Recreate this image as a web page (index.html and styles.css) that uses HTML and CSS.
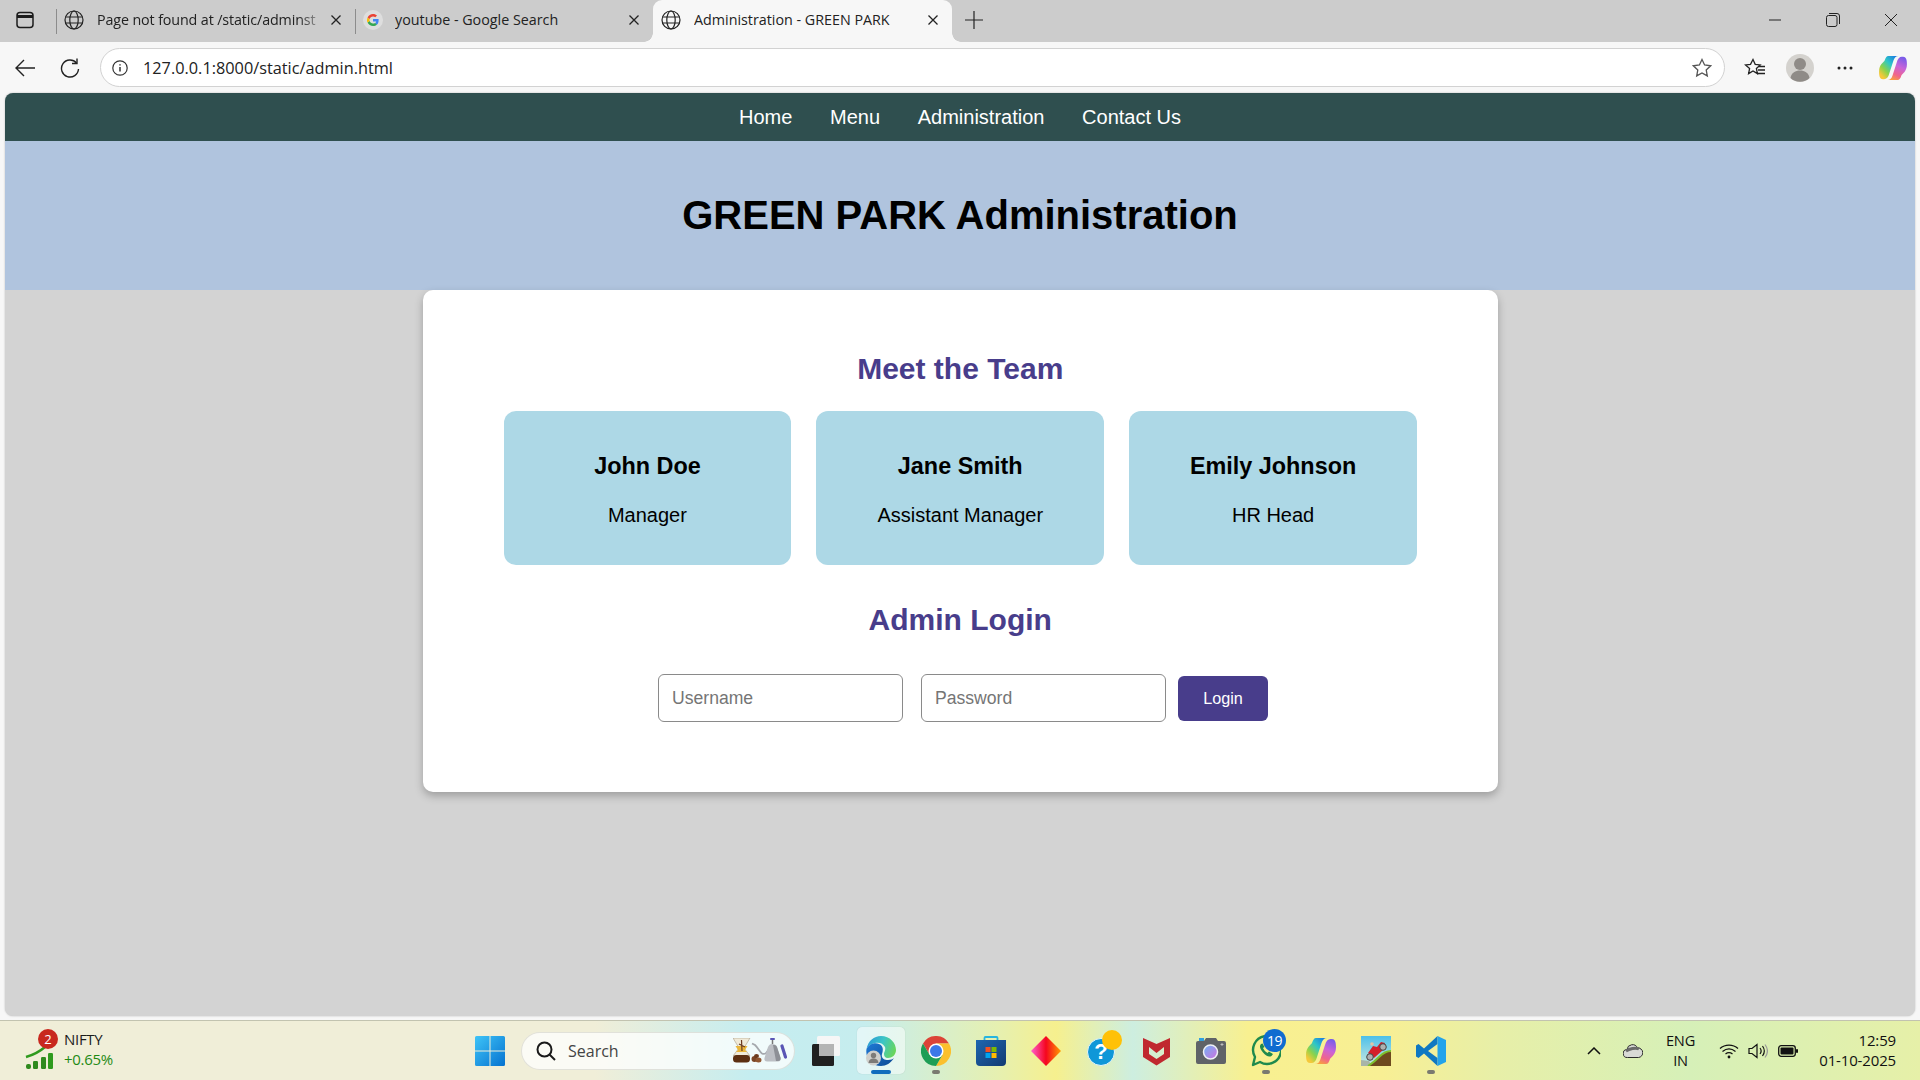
FILE: index.html
```html
<!DOCTYPE html>
<html lang="en">
<head>
<meta charset="utf-8">
<title>Administration - GREEN PARK</title>
<link rel="stylesheet" href="styles.css">
</head>
<body>
<div class="window">
  <div class="tabstrip">
    <div class="panel-btn">
      <svg width="18" height="18" viewBox="0 0 18 18" fill="none" stroke="#1c1c1c" stroke-width="1.5"><rect x="1" y="1.5" width="16" height="15" rx="3"/><path d="M1 5.5h16" stroke-width="3"/></svg>
    </div>
    <div class="tab tab-sep">
      <svg class="favicon" viewBox="0 0 20 20" fill="none" stroke="#222" stroke-width="1.2"><circle cx="10" cy="10" r="9"/><ellipse cx="10" cy="10" rx="4.2" ry="9"/><path d="M1.6 7h16.8M1.6 13h16.8"/></svg>
      <span class="tab-title fade">Page not found at /static/adminst</span>
      <svg class="tab-close" viewBox="0 0 12 12" stroke="#222" stroke-width="1.3"><path d="M1.5 1.5l9 9M10.5 1.5l-9 9"/></svg>
    </div>
    <div class="tab tab-sep tab-second">
      <svg class="favicon" viewBox="0 0 20 20"><circle cx="10" cy="10" r="10" fill="#dedede"/><path d="M15.6 10.2c0-.5 0-.9-.1-1.3H10v2.500h3.200c-.2.800-.6 1.400-1.200 1.900l1.900 1.500c1.100-1 1.700-2.600 1.700-4.600z" fill="#4285f4"/><path d="M10 16c1.600 0 3-.5 3.900-1.500L12 13c-.5.400-1.200.600-2 .600-1.600 0-2.900-1-3.400-2.500l-2 1.500C5.600 14.700 7.600 16 10 16z" fill="#34a853"/><path d="M6.600 11.100c-.2-.7-.2-1.500 0-2.200l-2-1.500c-.8 1.600-.8 3.600 0 5.200z" fill="#fbbc05"/><path d="M10 6.400c.9 0 1.700.3 2.300.9l1.700-1.700C13 4.600 11.600 4 10 4 7.600 4 5.600 5.300 4.600 7.400l2 1.500C7.100 7.400 8.400 6.400 10 6.400z" fill="#ea4335"/></svg>
      <span class="tab-title">youtube - Google Search</span>
      <svg class="tab-close" viewBox="0 0 12 12" stroke="#222" stroke-width="1.3"><path d="M1.5 1.5l9 9M10.500 1.500l-9 9"/></svg>
    </div>
    <div class="tab tab-active">
      <svg class="favicon" viewBox="0 0 20 20" fill="none" stroke="#222" stroke-width="1.2"><circle cx="10" cy="10" r="9"/><ellipse cx="10" cy="10" rx="4.2" ry="9"/><path d="M1.6 7h16.8M1.6 13h16.800"/></svg>
      <span class="tab-title">Administration - GREEN PARK</span>
      <svg class="tab-close" viewBox="0 0 12 12" stroke="#222" stroke-width="1.3"><path d="M1.5 1.5l9 9M10.500 1.500l-9 9"/></svg>
    </div>
    <svg class="new-tab" width="18" height="18" viewBox="0 0 18 18" stroke="#222" stroke-width="1.2"><path d="M9 0v18M0 9h18"/></svg>
    <div class="win-controls">
      <svg width="14" height="14" viewBox="0 0 14 14" stroke="#222" stroke-width="1"><path d="M1 7h12"/></svg>
      <svg width="14" height="14" viewBox="0 0 14 14" fill="none" stroke="#222" stroke-width="1"><rect x=".5" y="2.500" width="10.500" height="11" rx="2"/><path d="M3 .5h8a2.500 2.500 0 0 1 2.500 2.500v8"/></svg>
      <svg width="14" height="14" viewBox="0 0 14 14" stroke="#222" stroke-width="1"><path d="M1 1l12 12M13 1L1 13"/></svg>
    </div>
  </div>

  <div class="toolbar">
    <svg class="tb-back" width="20" height="18" viewBox="0 0 20 18" fill="none" stroke="#222" stroke-width="1.4"><path d="M20 9H1M9 1L1 9l8 8"/></svg>
    <svg class="tb-reload" width="20" height="20" viewBox="0 0 20 20" fill="none" stroke="#222" stroke-width="1.4"><path d="M16.500 5A8.500 8.500 0 1 0 18.500 11"/><path d="M17 .5V5.500h-5"/></svg>
    <div class="address">
      <svg width="16" height="16" viewBox="0 0 16 16" fill="none" stroke="#333" stroke-width="1.200"><circle cx="8" cy="8" r="7.200"/><path d="M8 7v4.500" stroke-width="1.500"/><path d="M8 4.200v1.400" stroke-width="1.500"/></svg>
      <span class="url">127.0.0.1:8000/static/admin.html</span>
      <svg class="addr-star" width="20" height="20" viewBox="0 0 20 20" fill="none" stroke="#555" stroke-width="1.300"><path d="M10 1.500l2.600 5.500 6 .8-4.400 4.100 1.100 6L10 15l-5.300 2.900 1.100-6L1.400 7.800l6-.8z"/></svg>
    </div>
    <div class="tb-icons">
      <svg class="ic-fav" width="22" height="20" viewBox="0 0 22 20" fill="none" stroke="#222" stroke-width="1.300"><path d="M9 1.500l2.200 4.800 5 .6-3.800 3.500 1 5.200L9 13l-4.400 2.600 1-5.200L1.500 6.900l5-.6z"/><path d="M14.500 8.500H21M14 12h7M13.500 15.500H21"/></svg>
      <svg class="ic-profile" width="28" height="28" viewBox="0 0 28 28"><circle cx="14" cy="14" r="14" fill="#d4d2ce"/><circle cx="14" cy="10" r="6" fill="#8f8b87"/><path d="M4.500 24c1-5.500 5-7.500 9.500-7.500s8.500 2 9.500 7.500a14 14 0 0 1-19 0z" fill="#8f8b87"/></svg>
      <svg class="ic-dots" width="16" height="4" viewBox="0 0 16 4" fill="#222"><circle cx="2" cy="2" r="1.500"/><circle cx="8" cy="2" r="1.500"/><circle cx="14" cy="2" r="1.500"/></svg>
      <svg class="ic-copilot" width="28" height="26" viewBox="0 0 30 28"><use href="#copilot-mark"/></svg>
    </div>
  </div>

  <main class="page">
    <nav class="nav">
      <a>Home</a><a>Menu</a><a>Administration</a><a>Contact Us</a>
    </nav>
    <header class="hero"><h1>GREEN PARK Administration</h1></header>
    <section class="card">
      <h2 class="section-title">Meet the Team</h2>
      <div class="team">
        <article class="member"><h3>John Doe</h3><p>Manager</p></article>
        <article class="member"><h3>Jane Smith</h3><p>Assistant Manager</p></article>
        <article class="member"><h3>Emily Johnson</h3><p>HR Head</p></article>
      </div>
      <h2 class="section-title login-title">Admin Login</h2>
      <form class="login">
        <input type="text" placeholder="Username">
        <input type="password" placeholder="Password">
        <button type="button">Login</button>
      </form>
    </section>
  </main>

  <footer class="taskbar">
    <div class="widget">
      <div class="nifty-icon">
        <svg width="30" height="30" viewBox="0 0 30 30"><path d="M1 16C8 14 13 12 20 6" fill="none" stroke="#2f9a1e" stroke-width="2.500"/><rect x="1" y="23" width="5" height="5" rx="2" fill="#2f8a1e"/><rect x="8" y="20" width="5" height="8" rx="1.200" fill="#2f8a1e"/><rect x="16" y="16" width="5" height="12" rx="1.200" fill="#2f8a1e"/><rect x="23" y="12" width="5" height="16" rx="1.200" fill="#2f9a1e"/></svg>
        <span class="badge-red">2</span>
      </div>
      <div class="nifty-text"><span>NIFTY</span><span class="up">+0.65%</span></div>
    </div>
    <div class="apps">
      <div class="slot slot-start">
        <svg width="30" height="30" viewBox="0 0 30 30"><defs><linearGradient id="w1" x1="0" y1="0" x2="1" y2="1"><stop offset="0" stop-color="#3fc4f7"/><stop offset="1" stop-color="#0572d0"/></linearGradient></defs><path d="M0 1.500A1.500 1.500 0 0 1 1.500 0H14.500V14.500H0zM15.500 0H28.500A1.500 1.500 0 0 1 30 1.500V14.500H15.500zM0 15.500H14.500V30H1.500A1.500 1.500 0 0 1 0 28.500zM15.500 15.500H30V28.500A1.500 1.500 0 0 1 28.500 30H15.500z" fill="url(#w1)"/></svg>
      </div>
      <div class="searchbox">
        <svg width="20" height="20" viewBox="0 0 20 20" fill="none" stroke="#1a1a1a" stroke-width="2"><circle cx="8.500" cy="8.500" r="7"/><path d="M13.500 13.500l5.500 5.500"/></svg>
        <span class="search-label">Search</span>
        <svg class="search-art" width="54" height="26" viewBox="0 0 54 26">
          <path d="M0 0H17L11 10 17 18H0L6 10z" fill="#f0ead8" stroke="#a99a84" stroke-width=".6"/>
          <path d="M2.500 8H14.500L12 12 14 14H3L5 12z" fill="#eab63c"/>
          <path d="M8.500 2L9 13M6 6l6 3" stroke="#6b3a1e" stroke-width="1.200"/>
          <rect x="0" y="17" width="17" height="7.500" rx="3.500" fill="#5c2f12"/>
          <ellipse cx="21.500" cy="21" rx="3" ry="3" fill="#7a4526"/><ellipse cx="25.500" cy="22" rx="3" ry="2.500" fill="#8f5530"/><ellipse cx="23.500" cy="18" rx="2.500" ry="2" fill="#6b3a1e"/>
          <path d="M37 9c-3 6-5 8-8 6.500C27 14 25 10 22 7l-3-1.500" fill="none" stroke="#a5a8ad" stroke-width="1.800"/>
          <path d="M39 6c-2 0-3 1-4 3l-3.500 11c-.5 2 .5 3.500 2.500 3.500h11c2 0 3-1.500 2.500-3.500L44 9c-1-2-2-3-5-3z" fill="#bcbfc4"/>
          <path d="M40 7l3 16h2c2 0 3-1.500 2.500-3.500L44 9c-1-2-2-2-4-2z" fill="#8d9096"/>
          <rect x="37" y="0" width="5" height="2" rx="1" fill="#5a55b5"/><path d="M39.500 2v4" stroke="#777" stroke-width="1.500"/>
          <path d="M49 8l3.500 11" stroke="#5a55b5" stroke-width="3.200" stroke-linecap="round"/>
        </svg>
      </div>
      <div class="slot slot-taskview">
        <svg width="28" height="30" viewBox="0 0 28 30"><rect x="5" y="0" width="23" height="20" rx="1.500" fill="#f6f6f6"/><rect x="0" y="8" width="22" height="22" rx="1.500" fill="#202020"/><rect x="7" y="8" width="15" height="12" fill="#b4b4b4"/></svg>
      </div>
      <div class="slot slot-active">
        <svg width="30" height="30" viewBox="0 0 30 30"><defs><linearGradient id="e1" x1="0" y1=".3" x2="1" y2=".6"><stop offset="0" stop-color="#2a9bd6"/><stop offset=".5" stop-color="#3cc5c6"/><stop offset="1" stop-color="#6ad65a"/></linearGradient><linearGradient id="e2" x1="0" y1="0" x2="1" y2="1"><stop offset="0" stop-color="#1f7ad6"/><stop offset="1" stop-color="#0c4a94"/></linearGradient></defs><path d="M.5 13C2 5 8 0 15 0c9 0 15 7 15 14 0 5-4 8-8 8-3 0-4-2-4-4s2-4 1-7c-2-4-6-5-10-4C5 8 2 10 .5 13z" fill="url(#e1)"/><path d="M.5 13C3 8 9 6 13 8c5 2 4 7 3 10-1 4 2 6 6 6 3 0 5-1 6-2-3 5-8 8-13 8C6 30-1 22 .5 13z" fill="url(#e2)"/><circle cx="7.500" cy="22" r="7.500" fill="#cfcfcb"/><circle cx="7.500" cy="19.500" r="2.700" fill="#7d7b78"/><path d="M2.500 27c.5-3.500 2.500-4.500 5-4.500s4.500 1 5 4.500z" fill="#7d7b78"/></svg>
        <span class="run run-active"></span>
      </div>
      <div class="slot">
        <svg width="30" height="30" viewBox="0 0 30 30"><path d="M2 7.500A15 15 0 0 1 28 7.500H15L8.500 18.750z" fill="#dc4437"/><path d="M28 7.500A15 15 0 0 1 15 30L21.500 18.750 15 7.500z" fill="#fbc02d"/><path d="M15 30A15 15 0 0 1 2 7.500L8.500 18.750H21.500z" fill="#1e9e55"/><circle cx="15" cy="15" r="7.500" fill="#fff"/><circle cx="15" cy="15" r="6" fill="#3b78e7"/></svg>
        <span class="run"></span>
      </div>
      <div class="slot">
        <svg width="30" height="30" viewBox="0 0 30 30"><defs><linearGradient id="s1" x1="0" y1="0" x2="1" y2="1"><stop offset="0" stop-color="#1d66b0"/><stop offset="1" stop-color="#123a72"/></linearGradient></defs><path d="M8.500 5V2a1 1 0 0 1 1-1h11a1 1 0 0 1 1 1v3" fill="none" stroke="#26b5e0" stroke-width="1.800"/><path d="M0 4H30V26a4 4 0 0 1-4 4H4a4 4 0 0 1-4-4z" fill="url(#s1)"/><rect x="9.500" y="11" width="5" height="5" fill="#f25022"/><rect x="15.500" y="11" width="5" height="5" fill="#7fba00"/><rect x="9.500" y="17" width="5" height="5" fill="#00a4ef"/><rect x="15.500" y="17" width="5" height="5" fill="#ffb900"/></svg>
      </div>
      <div class="slot">
        <svg width="30" height="30" viewBox="0 0 30 30"><defs><linearGradient id="d1" x1="0" y1="0" x2="1" y2="0"><stop offset="0" stop-color="#ff5fd0"/><stop offset=".5" stop-color="#f5061e"/><stop offset="1" stop-color="#ff9d00"/></linearGradient></defs><path d="M15 0l15 15-15 15L0 15z" fill="url(#d1)"/></svg>
      </div>
      <div class="slot">
        <div class="help-icon"><span class="help-mark">?</span><span class="help-dot"></span></div>
      </div>
      <div class="slot">
        <svg width="27" height="30" viewBox="0 0 27 30"><path fill-rule="evenodd" d="M0 2L13.500 8 27 2V21L13.500 29.500 0 21zM6 11V18L13.500 23 21 18V11L13.500 17z" fill="#c0282f"/></svg>
      </div>
      <div class="slot">
        <svg width="30" height="26" viewBox="0 0 30 26"><defs><linearGradient id="c1" x1="0" y1="0" x2="1" y2="1"><stop offset="0" stop-color="#6fb4f5"/><stop offset="1" stop-color="#d070e0"/></linearGradient></defs><rect x="3" y="0" width="5" height="3" fill="#2f9fe0"/><path d="M0 5a2 2 0 0 1 2-2h6l2-3h10l2 3h6a2 2 0 0 1 2 2v19a2 2 0 0 1-2 2H2a2 2 0 0 1-2-2z" fill="#5f6368"/><circle cx="14.500" cy="14" r="7" fill="url(#c1)" stroke="#eef0f5" stroke-width="1.500"/><path d="M26 5v3M24.500 6.500h3" stroke="#ccc" stroke-width=".8"/></svg>
      </div>
      <div class="slot">
        <div class="wa-icon">
          <svg width="30" height="32" viewBox="0 0 30 32" fill="none"><path d="M2 30l2-8A14 14 0 1 1 9 27z" stroke="#1f8a4d" stroke-width="2.400" stroke-linejoin="round"/><path d="M10 9c-2 2-1 5 2 8.500 3 3.500 6 5 8.500 3.500l1.500-2-4-2.500-1.500 1.500c-2-1-3.500-3-4.500-5l1.500-1-2-3.500z" fill="#1f8a4d"/></svg>
          <span class="badge-blue">19</span>
        </div>
        <span class="run"></span>
      </div>
      <div class="slot">
        <svg width="30" height="28" viewBox="0 0 30 28"><use href="#copilot-mark"/></svg>
      </div>
      <div class="slot">
        <svg width="30" height="30" viewBox="0 0 30 30"><defs><linearGradient id="g1" x1="0" y1="0" x2="0" y2="1"><stop offset="0" stop-color="#4cc0ea"/><stop offset="1" stop-color="#cdeadf"/></linearGradient></defs><rect width="30" height="30" fill="url(#g1)"/><path d="M0 24l8 1 3 5H0z" fill="#a9b4a8"/><path d="M7 30c5-3 8-6 11-9 4-4 8-6 12-6v15z" fill="#6e4a1f"/><path d="M7 30c5-3 8-6 11-9 4-4 8-6 12-6" fill="none" stroke="#7fc02c" stroke-width="2"/><path d="M7 17l5-7 4 1 4-5 4 1-2 7-9 8z" fill="#d4202a"/><circle cx="9" cy="21" r="3.300" fill="#aeb0b0" stroke="#444" stroke-width="1"/><circle cx="22" cy="11" r="3.300" fill="#aeb0b0" stroke="#444" stroke-width="1"/><circle cx="11" cy="8" r="1.800" fill="#e0c4a8"/></svg>
      </div>
      <div class="slot">
        <svg width="30" height="30" viewBox="0 0 30 30"><path d="M21.500 0L8 12.500 2.500 8 0 9.500v11L2.500 22 8 17.500 21.500 30V22L12 15 21.500 8z" fill="#0f78c2"/><path d="M21.500 0L30 4V26L21.500 30z" fill="#23a3ea"/></svg>
        <span class="run"></span>
      </div>
    </div>
    <div class="tray">
      <svg class="tr-caret" width="14" height="8" viewBox="0 0 14 8" fill="none" stroke="#111" stroke-width="1.500"><path d="M1 7l6-6 6 6"/></svg>
      <svg class="tr-cloud" width="20" height="14" viewBox="0 0 20 14"><path d="M4.500 13.500a4 4 0 0 1-.5-8A5.500 5.500 0 0 1 14.500 4 4.500 4.500 0 0 1 15.500 13.500z" fill="#d9dad6" stroke="#2b2b2b" stroke-width="1"/><path d="M3 7c3-2 10-4 13-2" fill="none" stroke="#6a6a6a" stroke-width="3"/></svg>
      <div class="tr-lang"><span>ENG</span><span>IN</span></div>
      <svg class="tr-wifi" width="20" height="16" viewBox="0 0 20 16" fill="none" stroke="#111" stroke-width="1.300"><path d="M1 5.500C6 1 14 1 19 5.500M3.500 8.500c4-3.200 9-3.200 13 0M6.500 11c2-1.500 5-1.500 7 0"/><circle cx="10" cy="14" r="1.400" fill="#111" stroke="none"/></svg>
      <svg class="tr-vol" width="20" height="16" viewBox="0 0 20 16" fill="none" stroke="#111" stroke-width="1.200"><path d="M1 5.500h3L9 1.500v13l-5-4H1z"/><path d="M12 5c1.300 1.700 1.300 4.300 0 6M14.500 3c2.200 3 2.200 7 0 10"/><path d="M17 1.500c3 4 3 9 0 13" stroke="#999"/></svg>
      <svg class="tr-batt" width="20" height="14" viewBox="0 0 20 14"><rect x=".7" y="1.700" width="16.600" height="10.600" rx="2.500" fill="none" stroke="#111" stroke-width="1.300"/><rect x="2.500" y="3.500" width="13" height="7" rx="1" fill="#111"/><rect x="18" y="5" width="2" height="4" rx="1" fill="#111"/></svg>
      <div class="tr-clock"><span>12:59</span><span>01-10-2025</span></div>
    </div>
  </footer>
</div>
<svg class="sprite" width="0" height="0">
  <defs>
    <linearGradient id="cpl" x1=".8" y1="0" x2="0" y2=".9"><stop offset="0" stop-color="#1c7fe0"/><stop offset=".35" stop-color="#2ec7c7"/><stop offset=".65" stop-color="#8bd34a"/><stop offset=".9" stop-color="#f5c83a"/></linearGradient>
    <linearGradient id="cpr" x1=".7" y1="0" x2=".3" y2="1"><stop offset="0" stop-color="#7a5ce8"/><stop offset=".4" stop-color="#c964d8"/><stop offset=".75" stop-color="#f0648c"/><stop offset="1" stop-color="#f8a040"/></linearGradient>
    <symbol id="copilot-mark" viewBox="0 0 30 28">
      <path d="M10 1H21C18 1 16.500 3 15.500 6L11 20C10 24 8 26 5.500 26H4C1 26 0 23 0 18 0 10 5 8 6 6 7 3 8 1 10 1z" fill="url(#cpl)"/>
      <path d="M20 27H9C12 27 13.500 25 14.500 22L19 8C20 4 22 2 24.500 2H26C29 2 30 5 30 10 30 18 25 20 24 22 23 25 22 27 20 27z" fill="url(#cpr)"/>
    </symbol>
  </defs>
</svg>
</body>
</html>
```

FILE: styles.css
```css
* { box-sizing: border-box; }
html, body { margin: 0; height: 100%; overflow: hidden; }
body { font-family: "Liberation Sans", Arial, sans-serif; background: #f7f7f7; }
.sprite { display: block; height: 0; }

.window { display: flex; flex-direction: column; height: 1080px; background: #f7f7f7; }

/* Tab strip */
.tabstrip { display: flex; align-items: center; height: 42px; background: #cccccc; flex: none; font-family: "Open Sans", "Noto Sans", sans-serif; }
.panel-btn { width: 56px; display: flex; padding-left: 16px; flex: none; margin-bottom: 2px; }
.tab { position: relative; display: flex; align-items: center; width: 299px; height: 42px; flex: none; padding: 0 13px 2px 8px; }
.tab-sep::before { content: ""; position: absolute; left: 0; top: 9px; height: 25px; width: 1px; background: #8c8c8c; }
.tab-second { width: 298px; }
.tab-second .tab-title { margin-left: 12px; }
.tab > .favicon { width: 20px; height: 20px; flex: none; }
.tab-title { flex: 1; min-width: 0; margin-left: 13px; font-size: 14.3px; color: #222; white-space: nowrap; overflow: hidden; margin-top: -1px; }
.fade { letter-spacing: -.12px; -webkit-mask-image: linear-gradient(90deg, #000 90%, rgba(0,0,0,.25) 100%); mask-image: linear-gradient(90deg, #000 90%, rgba(0,0,0,.25) 100%); }
.tab-close { width: 12px; height: 12px; flex: none; margin-left: 10px; }
.tab-active { background: #f7f7f7; border-radius: 9px 9px 0 0; }
.tab-active::before, .tab-active::after { content: ""; position: absolute; bottom: 0; width: 9px; height: 9px; }
.tab-active::before { left: -9px; background: radial-gradient(circle at 0 0, #cccccc 8.500px, #f7f7f7 9px); }
.tab-active::after { right: -9px; background: radial-gradient(circle at 100% 0, #cccccc 8.500px, #f7f7f7 9px); }
.new-tab { margin: 0 0 2px 13px; flex: none; }
.win-controls { margin: 0 0 2px auto; display: flex; gap: 44px; padding-right: 22px; }

/* Toolbar */
.toolbar { display: flex; align-items: center; height: 51px; flex: none; padding: 0 0 0 15px; }
.tb-back { flex: none; margin-right: 25px; }
.tb-reload { flex: none; margin-right: 20px; }
.address { display: flex; align-items: center; width: 1625px; height: 39px; flex: none; background: #fff; border: 1px solid #d2d2d2; border-radius: 20px; padding: 0 12.500px 0 11px; }
.url { flex: 1; margin-left: 15px; font: 16.3px "Open Sans", "Noto Sans", sans-serif; color: #222; }
.tb-icons { display: flex; align-items: center; padding-left: 19px; }
.ic-fav { margin-right: 20px; }
.ic-profile { margin-right: 23px; }
.ic-dots { margin-right: 26px; }
.ic-copilot { flex: none; }

/* Page */
.page { flex: 1; margin: 0 5px 4px; background: #d3d3d3; border-radius: 8px; overflow: hidden; min-height: 0; box-shadow: 0 0 2px rgba(0,0,0,.25); }
.nav { display: flex; justify-content: center; gap: 37.7px; height: 48px; align-items: center; background: #2f4f4f; }
.nav a { color: #fff; font-size: 20px; }
.hero { background: #b0c4de; height: 149px; display: flex; align-items: center; justify-content: center; padding-bottom: 1px; }
.hero h1 { margin: 0; font-size: 40px; line-height: 46px; font-weight: 700; color: #000; }
.card { width: 1075px; margin: 0 auto; padding: 62px 80.500px 70px 81px; background: #fff; border-radius: 10px; box-shadow: 0 4px 8px rgba(0,0,0,.25); }
.section-title { margin: 0 0 25px; font-size: 30px; line-height: 34px; text-align: center; color: #483d8b; }
.team { display: flex; gap: 25px; }
.member { flex: 1; height: 154px; background: #add8e6; border-radius: 12px; text-align: center; padding-top: 41px; }
.member h3 { margin: 0; font-size: 23.4px; line-height: 28px; color: #000; }
.member p { margin: 23px 0 0; font-size: 20px; line-height: 24px; color: #000; }
.login-title { margin: 38px 0 37px; }
.login { display: flex; align-items: center; justify-content: center; padding-left: 5.500px; }
.login input { width: 245px; height: 48px; margin-right: 18px; padding: 0 13px; border: 1px solid #8a8a8a; border-radius: 6px; font: 17.6px "Liberation Sans", Arial, sans-serif; background: #fff; }
.login input:nth-of-type(2) { margin-right: 12px; }
.login input::placeholder { color: #757575; opacity: 1; }
.login button { width: 90px; height: 45px; border: 0; border-radius: 6px; background: #483d8b; color: #fff; font: 16.2px "Liberation Sans", Arial, sans-serif; }

/* Taskbar */
.taskbar { display: flex; align-items: center; height: 60px; flex: none; border-top: 1px solid #c2c3b0; font-family: "Open Sans", "Noto Sans", sans-serif; background: linear-gradient(90deg, #f0eed8 0%, #f0eed8 31%, #c5edf0 39%, #c6edee 45%, #e6f0b0 52%, #f6f08e 55%, #cdeee0 59%, #f8f090 65%, #f8ef94 72%, #e7efa8 78%, #d6f0b8 88%, #e6f0a8 100%); }
.widget { display: flex; width: 462px; flex: none; padding-left: 25px; align-items: center; }
.nifty-icon { position: relative; width: 30px; height: 40px; flex: none; margin-right: 9px; display: flex; align-items: flex-end; }
.badge-red { position: absolute; left: 13px; top: -2px; width: 20px; height: 20px; border-radius: 50%; background: #c8281e; color: #fff; font-size: 13px; line-height: 20px; text-align: center; }
.nifty-text { display: flex; flex-direction: column; font-size: 15px; line-height: 20px; color: #1c1c1c; letter-spacing: -.3px; margin-top: -3px; }
.up { color: #1f8a16; }
.apps { display: flex; align-items: center; flex: none; }
.slot { position: relative; display: flex; align-items: center; justify-content: center; width: 55px; height: 47px; flex: none; }
.slot-start { margin-right: 4px; }
.searchbox { display: flex; align-items: center; width: 274px; height: 38px; flex: none; background: rgba(255,255,255,.75); border: 1px solid rgba(200,200,190,.5); border-radius: 19px; padding: 0 7px 0 14px; margin-right: 3.500px; }
.search-label { flex: 1; margin-left: 12px; font-size: 16px; color: #444; }
.slot-active { background: rgba(255,255,255,.5); border-radius: 5px; width: 48px; margin: 0 3.500px; box-shadow: 0 0 1px rgba(0,0,0,.2); }
.run { position: absolute; bottom: 0; left: 50%; width: 8px; height: 4px; margin-left: -4px; border-radius: 2px; background: #7a7a70; }
.run-active { width: 20px; margin-left: -10px; background: #0f6cbd; }
.help-icon { position: relative; width: 28px; height: 30px; display: flex; align-items: center; }
.help-mark { width: 28px; height: 28px; margin-top: 2px; border-radius: 50%; background: #0f97d8; border: 1px solid #e6f6fb; color: #fff; font: 700 22px/26px "Liberation Sans", sans-serif; text-align: center; }
.help-dot { position: absolute; left: 15px; top: -6px; width: 20px; height: 20px; border-radius: 50%; background: #ffc107; }
.wa-icon { position: relative; width: 30px; height: 32px; }
.badge-blue { position: absolute; left: 12px; top: -6px; width: 23px; height: 23px; border-radius: 50%; background: #0f6cd0; color: #fff; font-size: 14px; line-height: 23px; text-align: center; letter-spacing: -.5px; }

/* Tray */
.tray { position: relative; display: flex; align-items: center; margin-left: auto; padding-right: 24px; color: #111; }
.tr-caret { margin-right: 22px; }
.tr-cloud { margin-right: 22.500px; }
.tr-lang { display: flex; flex-direction: column; align-items: center; width: 30px; margin-right: 23.500px; font-size: 14.6px; line-height: 20px; letter-spacing: -.2px; margin-top: -2px; }
.tr-wifi { margin-right: 9px; }
.tr-vol { margin-right: 10px; }
.tr-batt { margin-right: 10px; }
.tr-clock { display: flex; flex-direction: column; align-items: flex-end; width: 88px; font-size: 15px; line-height: 20px; letter-spacing: -.15px; margin-top: -2px; }
```
